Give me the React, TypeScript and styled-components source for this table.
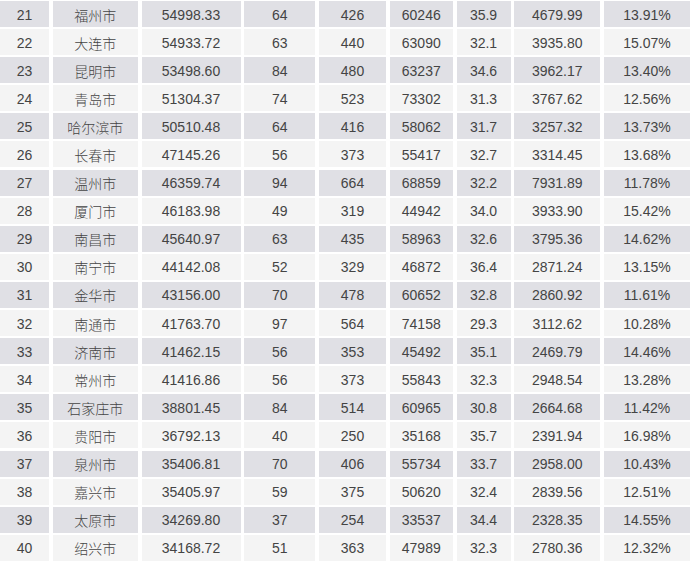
import { FC } from "react";
import styled, { createGlobalStyle } from "styled-components";

const GlobalStyle = createGlobalStyle`
    html, body {
        margin: 0;
        padding: 0;
        background: #ffffff;
    }
    body {
        font-family: "Liberation Sans", "Noto Sans CJK SC", sans-serif;
    }
`;

type Row = [number, string, string, number, number, number, string, string, string];

const rows: Row[] = [
    [21, "福州市", "54998.33", 64, 426, 60246, "35.9", "4679.99", "13.91%"],
    [22, "大连市", "54933.72", 63, 440, 63090, "32.1", "3935.80", "15.07%"],
    [23, "昆明市", "53498.60", 84, 480, 63237, "34.6", "3962.17", "13.40%"],
    [24, "青岛市", "51304.37", 74, 523, 73302, "31.3", "3767.62", "12.56%"],
    [25, "哈尔滨市", "50510.48", 64, 416, 58062, "31.7", "3257.32", "13.73%"],
    [26, "长春市", "47145.26", 56, 373, 55417, "32.7", "3314.45", "13.68%"],
    [27, "温州市", "46359.74", 94, 664, 68859, "32.2", "7931.89", "11.78%"],
    [28, "厦门市", "46183.98", 49, 319, 44942, "34.0", "3933.90", "15.42%"],
    [29, "南昌市", "45640.97", 63, 435, 58963, "32.6", "3795.36", "14.62%"],
    [30, "南宁市", "44142.08", 52, 329, 46872, "36.4", "2871.24", "13.15%"],
    [31, "金华市", "43156.00", 70, 478, 60652, "32.8", "2860.92", "11.61%"],
    [32, "南通市", "41763.70", 97, 564, 74158, "29.3", "3112.62", "10.28%"],
    [33, "济南市", "41462.15", 56, 353, 45492, "35.1", "2469.79", "14.46%"],
    [34, "常州市", "41416.86", 56, 373, 55843, "32.3", "2948.54", "13.28%"],
    [35, "石家庄市", "38801.45", 84, 514, 60965, "30.8", "2664.68", "11.42%"],
    [36, "贵阳市", "36792.13", 40, 250, 35168, "35.7", "2391.94", "16.98%"],
    [37, "泉州市", "35406.81", 70, 406, 55734, "33.7", "2958.00", "10.43%"],
    [38, "嘉兴市", "35405.97", 59, 375, 50620, "32.4", "2839.56", "12.51%"],
    [39, "太原市", "34269.80", 37, 254, 33537, "34.4", "2328.35", "14.55%"],
    [40, "绍兴市", "34168.72", 51, 363, 47989, "32.3", "2780.36", "12.32%"],
];

const Table = styled.div`
    display: flex;
    flex-direction: column;
    gap: 2.1px;
    width: 690px;
    padding-top: 1px;
`;

const TableRow = styled.div`
    display: grid;
    grid-template-columns: 49px 85px 99px 71px 67px 63px 54px 86px 1fr;
    column-gap: 3.75px;
    height: 26px;
`;

const Cell = styled.div<{ $shaded: boolean; $cjk?: boolean }>`
    display: flex;
    align-items: center;
    justify-content: center;
    padding-top: 1px;
    background-color: ${(props) => (props.$shaded ? "#e0e0e5" : "#f4f4f4")};
    color: #444444;
    font-family: ${(props) =>
        props.$cjk ? `"Noto Sans CJK SC", sans-serif` : `"Liberation Sans", "Noto Sans CJK SC", sans-serif`};
    font-weight: ${(props) => (props.$cjk ? 300 : 400)};
    font-size: 14px;
    line-height: 1;
    white-space: nowrap;
`;

const App: FC = () => {
    return (
        <>
            <GlobalStyle />
            <Table>
                {rows.map((row) => (
                    <TableRow key={row[0]}>
                        {row.map((value, i) => (
                            <Cell key={i} $shaded={row[0] % 2 === 1} $cjk={i === 1}>
                                {value}
                            </Cell>
                        ))}
                    </TableRow>
                ))}
            </Table>
        </>
    );
};

export default App;
